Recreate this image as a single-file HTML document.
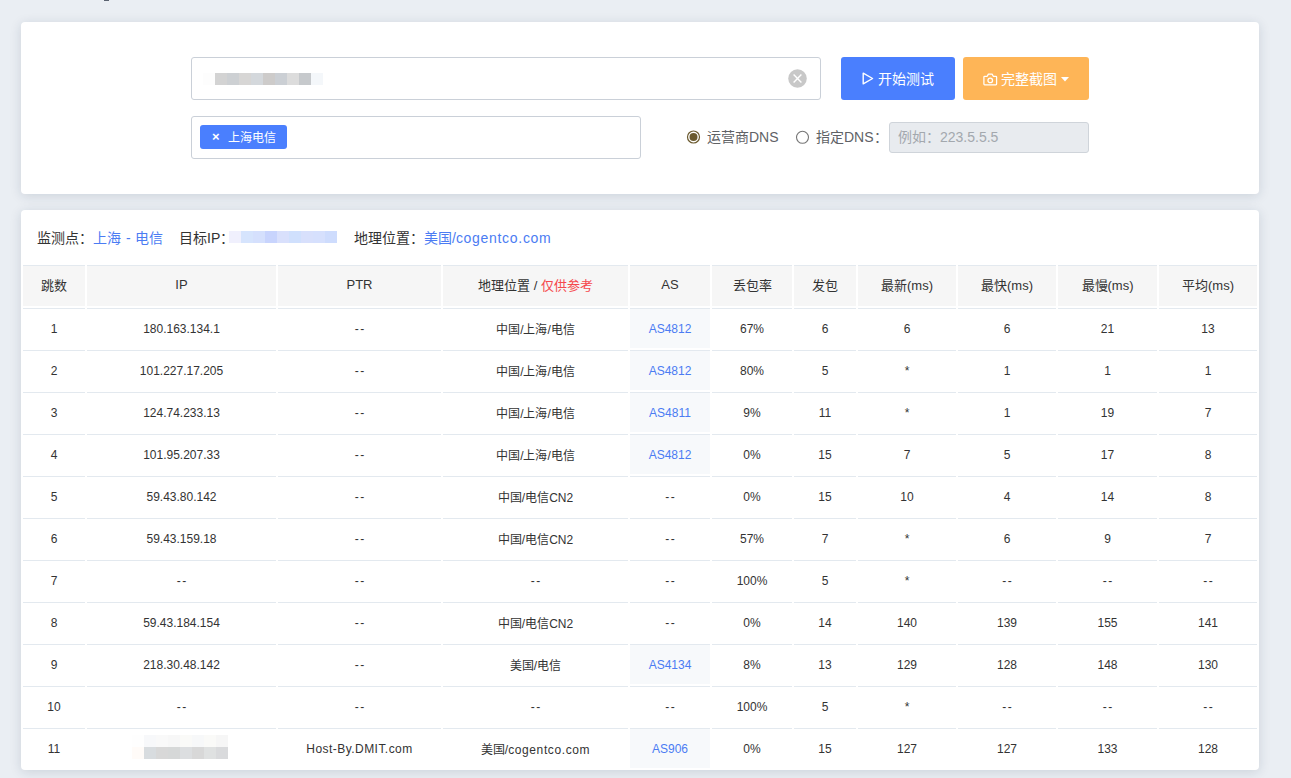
<!DOCTYPE html>
<html lang="zh-CN"><head><meta charset="utf-8">
<style>
html,body{margin:0;padding:0;}
body{width:1291px;height:778px;overflow:hidden;background:#eaeef3;font-family:"Liberation Sans",sans-serif;color:#333;position:relative;}
.card{position:absolute;left:21px;width:1238px;background:#fff;border-radius:4px;box-shadow:0 2px 12px rgba(20,40,70,.14);}
#c1{top:22px;height:172px;}
#c2{top:210px;height:560px;overflow:hidden;}
.abs{position:absolute;}
.inp{position:absolute;box-sizing:border-box;border:1px solid #cad0d8;border-radius:3px;background:#fff;}
.blk{position:absolute;height:12px;width:12px;}
.btn{position:absolute;box-sizing:border-box;border-radius:3px;color:#fff;font-size:14px;}
.tag{position:absolute;background:#4a7ffe;color:#fff;border-radius:3px;font-size:13px;}
.radio{position:absolute;box-sizing:border-box;border-radius:50%;width:13px;height:13px;}
.lbl{position:absolute;font-size:14px;color:#606266;white-space:nowrap;line-height:16px;}
.info{position:absolute;top:19px;font-size:14px;line-height:18px;white-space:nowrap;color:#333;}
.blue{color:#4b7cf3;}
table{position:absolute;left:0;top:53px;border-collapse:separate;border-spacing:2px;table-layout:fixed;width:1238px;}
td,th{border-top:1px solid #e3e9ef;padding:0;text-align:center;font-size:12px;font-weight:normal;white-space:nowrap;}
th{background:#f6f6f6;height:36px;padding-bottom:4px;font-size:13px;}
td{height:39px;}
td.as{background:#f7f9fb;color:#4b7cf3;}
.red{color:#f5484d;}
.dd{letter-spacing:1.4px;text-indent:1.4px;}
</style></head><body>
<div class="abs" style="left:104px;top:0;width:5px;height:1px;background:#5a6270;"></div>
<div class="card" id="c1">
  <div class="inp" style="left:170px;top:35px;width:630px;height:43px;"></div>
<div class="blk" style="left:182px;top:51px;background:#fdfdfd"></div><div class="blk" style="left:194px;top:51px;background:#d3d3d3"></div><div class="blk" style="left:206px;top:51px;background:#cdd0d3"></div><div class="blk" style="left:218px;top:51px;background:#d7d6d5"></div><div class="blk" style="left:230px;top:51px;background:#d4d8dc"></div><div class="blk" style="left:242px;top:51px;background:#cdcbca"></div><div class="blk" style="left:254px;top:51px;background:#cbcfd4"></div><div class="blk" style="left:266px;top:51px;background:#dcdcdc"></div><div class="blk" style="left:278px;top:51px;background:#c6c9cc"></div><div class="blk" style="left:290px;top:51px;background:#f4f7fa"></div>
<svg class="abs" style="left:767px;top:47px" width="19" height="19" viewBox="0 0 19 19"><circle cx="9.5" cy="9.5" r="9.3" fill="#c8c8c8"/><path d="M5.6 5.6L13.4 13.4M13.4 5.6L5.6 13.4" stroke="#fff" stroke-width="1.4"/></svg>
  <div class="btn" style="left:820px;top:35px;width:114px;height:43px;background:#4a7ffe;"><svg class="abs" style="left:21px;top:15px" width="12" height="13" viewBox="0 0 12 13"><path d="M1.2 1.2L10.6 6.5L1.2 11.8Z" fill="none" stroke="#fff" stroke-width="1.4" stroke-linejoin="round"/></svg><span class="abs" style="left:37px;top:14px;line-height:16px;">开始测试</span></div>
  <div class="btn" style="left:942px;top:35px;width:126px;height:43px;background:#feb557;"><svg class="abs" style="left:20px;top:16px" width="15" height="13" viewBox="0 0 15 13"><path d="M1.6 3.3H4.2L5.4 1.1H9.1L10.3 3.3H12.9Q13.6 3.3 13.6 4V11.1Q13.6 11.8 12.9 11.8H1.6Q0.9 11.8 0.9 11.1V4Q0.9 3.3 1.6 3.3Z" fill="none" stroke="#fff" stroke-width="1.25" stroke-linejoin="round"/><circle cx="7.25" cy="7.4" r="2.3" fill="none" stroke="#fff" stroke-width="1.3"/></svg><span class="abs" style="left:38px;top:14px;line-height:16px;">完整截图</span><svg class="abs" style="left:98px;top:20px" width="8" height="5" viewBox="0 0 8 5"><path d="M0 0H8L4 4.5Z" fill="#fff"/></svg></div>
  <div class="inp" style="left:170px;top:94px;width:450px;height:43px;"></div>
  <div class="tag" style="left:179px;top:103px;width:87px;height:24px;"><span class="abs" style="left:12px;top:4px;font-size:13px;line-height:16px;font-weight:bold;">×</span><span class="abs" style="left:28px;top:5px;line-height:16px;font-size:12px;">上海电信</span></div>
  <svg class="abs" style="left:665px;top:108px" width="15" height="15" viewBox="0 0 15 15"><circle cx="7.5" cy="7" r="6" fill="#fff" stroke="#6b5a2f" stroke-width="1.2"/><circle cx="7.5" cy="7" r="4" fill="#6b5a2f"/></svg>
<div class="lbl" style="left:686px;top:107px;">运营商DNS</div>
<svg class="abs" style="left:774px;top:108px" width="15" height="15" viewBox="0 0 15 15"><circle cx="7.5" cy="7.3" r="6" fill="#fff" stroke="#767676" stroke-width="1.1"/></svg>
<div class="lbl" style="left:795px;top:107px;">指定DNS：</div>
<div class="inp" style="left:868px;top:100px;width:200px;height:31px;background:#e8ebef;border-color:#cfd4da;"><span class="abs" style="left:8px;top:6px;font-size:14px;line-height:16px;color:#a3a8ae;white-space:nowrap;">例如：223.5.5.5</span></div>
</div>
<div class="card" id="c2">
  <div class="info" style="left:16px;">监测点：<span class="blue" style="word-spacing:1px">上海 - 电信</span></div>
  <div class="info" style="left:158px;">目标IP：</div>
  <div class="blk" style="left:208px;top:21px;background:#f0f0fd"></div><div class="blk" style="left:220px;top:21px;background:#d6e4fd"></div><div class="blk" style="left:232px;top:21px;background:#d5e0fd"></div><div class="blk" style="left:244px;top:21px;background:#c8d4fd"></div><div class="blk" style="left:256px;top:21px;background:#d9e0fc"></div><div class="blk" style="left:268px;top:21px;background:#d0e0fd"></div><div class="blk" style="left:280px;top:21px;background:#d8e0fc"></div><div class="blk" style="left:292px;top:21px;background:#d6e0fd"></div><div class="blk" style="left:304px;top:21px;background:#cedcfd"></div>
<div class="info" style="left:333px;">地理位置：<span class="blue">美国/<span style="letter-spacing:.7px">cogentco.com</span></span></div>
  <table>
    <colgroup><col style="width:62px"><col style="width:189px"><col style="width:163px"><col style="width:185px"><col style="width:80px"><col style="width:80px"><col style="width:62px"><col style="width:98px"><col style="width:98px"><col style="width:99px"><col style="width:98px"></colgroup>
    <tr><th>跳数</th><th>IP</th><th>PTR</th><th>地理位置 / <span class="red">仅供参考</span></th><th>AS</th><th>丢包率</th><th>发包</th><th>最新(ms)</th><th>最快(ms)</th><th>最慢(ms)</th><th>平均(ms)</th></tr>
    <tr><td>1</td><td>180.163.134.1</td><td class="dd">--</td><td>中国/上海/电信</td><td class="as">AS4812</td><td>67%</td><td>6</td><td>6</td><td>6</td><td>21</td><td>13</td></tr>
    <tr><td>2</td><td>101.227.17.205</td><td class="dd">--</td><td>中国/上海/电信</td><td class="as">AS4812</td><td>80%</td><td>5</td><td>*</td><td>1</td><td>1</td><td>1</td></tr>
    <tr><td>3</td><td>124.74.233.13</td><td class="dd">--</td><td>中国/上海/电信</td><td class="as">AS4811</td><td>9%</td><td>11</td><td>*</td><td>1</td><td>19</td><td>7</td></tr>
    <tr><td>4</td><td>101.95.207.33</td><td class="dd">--</td><td>中国/上海/电信</td><td class="as">AS4812</td><td>0%</td><td>15</td><td>7</td><td>5</td><td>17</td><td>8</td></tr>
    <tr><td>5</td><td>59.43.80.142</td><td class="dd">--</td><td>中国/电信CN2</td><td class="dd">--</td><td>0%</td><td>15</td><td>10</td><td>4</td><td>14</td><td>8</td></tr>
    <tr><td>6</td><td>59.43.159.18</td><td class="dd">--</td><td>中国/电信CN2</td><td class="dd">--</td><td>57%</td><td>7</td><td>*</td><td>6</td><td>9</td><td>7</td></tr>
    <tr><td>7</td><td class="dd">--</td><td class="dd">--</td><td class="dd">--</td><td class="dd">--</td><td>100%</td><td>5</td><td>*</td><td class="dd">--</td><td class="dd">--</td><td class="dd">--</td></tr>
    <tr><td>8</td><td>59.43.184.154</td><td class="dd">--</td><td>中国/电信CN2</td><td class="dd">--</td><td>0%</td><td>14</td><td>140</td><td>139</td><td>155</td><td>141</td></tr>
    <tr><td>9</td><td>218.30.48.142</td><td class="dd">--</td><td>美国/电信</td><td class="as">AS4134</td><td>8%</td><td>13</td><td>129</td><td>128</td><td>148</td><td>130</td></tr>
    <tr><td>10</td><td class="dd">--</td><td class="dd">--</td><td class="dd">--</td><td class="dd">--</td><td>100%</td><td>5</td><td>*</td><td class="dd">--</td><td class="dd">--</td><td class="dd">--</td></tr>
    <tr><td>11</td><td></td><td style="letter-spacing:.45px">Host-By.DMIT.com</td><td>美国/<span style="letter-spacing:.6px">cogentco.com</span></td><td class="as">AS906</td><td>0%</td><td>15</td><td>127</td><td>127</td><td>133</td><td>128</td></tr>
  </table>
<div class="blk" style="left:111px;top:525px;background:#fefefe"></div><div class="blk" style="left:123px;top:525px;background:#f7f8fa"></div><div class="blk" style="left:135px;top:525px;background:#f9f9f9"></div><div class="blk" style="left:147px;top:525px;background:#f7f7f7"></div><div class="blk" style="left:159px;top:525px;background:#fafaf8"></div><div class="blk" style="left:171px;top:525px;background:#f7f8f9"></div><div class="blk" style="left:183px;top:525px;background:#fafaf8"></div><div class="blk" style="left:195px;top:525px;background:#f6f6f6"></div><div class="blk" style="left:111px;top:537px;background:#fffbf8"></div><div class="blk" style="left:123px;top:537px;background:#d8dcdf"></div><div class="blk" style="left:135px;top:537px;background:#d8d8d8"></div><div class="blk" style="left:147px;top:537px;background:#d6d8d8"></div><div class="blk" style="left:159px;top:537px;background:#dcdee0"></div><div class="blk" style="left:171px;top:537px;background:#d8d8d8"></div><div class="blk" style="left:183px;top:537px;background:#dfe1e1"></div><div class="blk" style="left:195px;top:537px;background:#d9dadc"></div>
</div>
</body></html>
